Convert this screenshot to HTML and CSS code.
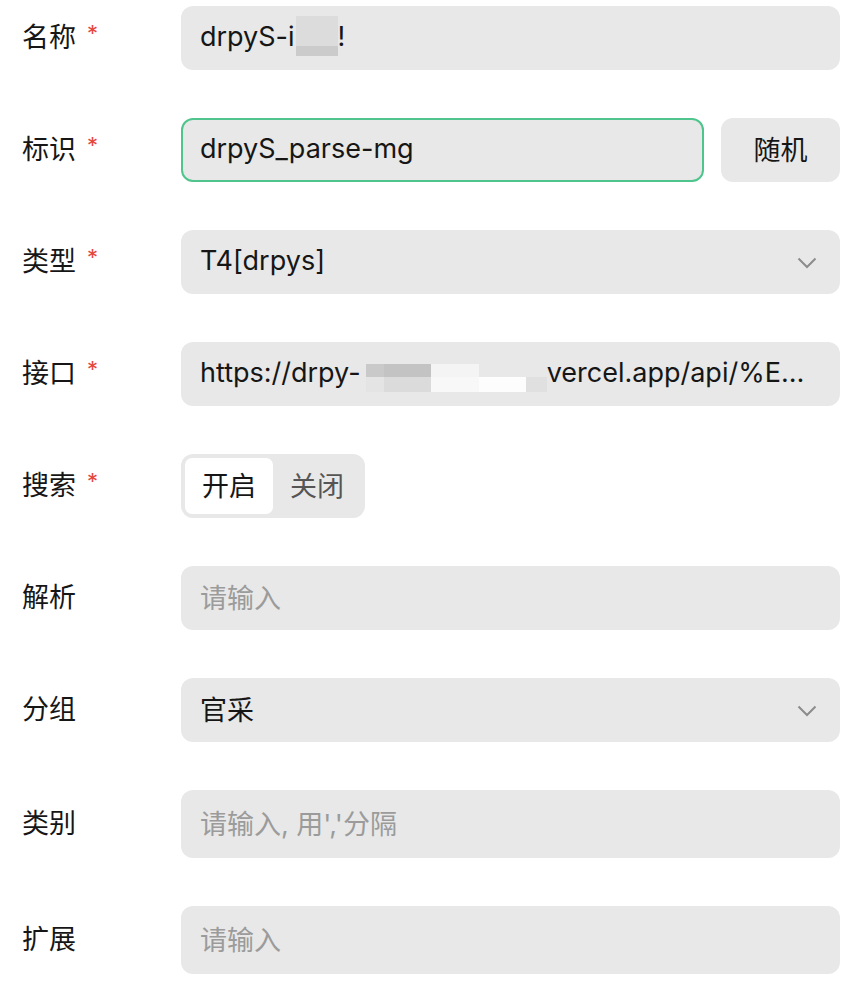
FILE: index.html
```html
<!DOCTYPE html>
<html lang="zh">
<head>
<meta charset="utf-8">
<title>编辑源</title>
<link rel="stylesheet" href="styles.css">
</head>
<body>
<form class="form">
  <div class="row">
    <div class="label">名称<span class="req">*</span></div>
    <div class="field">
      <div class="input value"><span>drpyS-i</span><span class="mosaic-a"></span><span>!</span></div>
    </div>
  </div>

  <div class="row">
    <div class="label">标识<span class="req">*</span></div>
    <div class="field with-btn">
      <div class="input focused value">drpyS_parse-mg</div>
      <div class="btn">随机</div>
    </div>
  </div>

  <div class="row">
    <div class="label">类型<span class="req">*</span></div>
    <div class="field">
      <div class="input select value"><span>T4[drpys]</span>
        <svg class="chev" width="20" height="12" viewBox="0 0 20 12"><polyline points="1.5,1.5 10,10 18.5,1.5" fill="none" stroke="#8c8c8c" stroke-width="2"/></svg>
      </div>
    </div>
  </div>

  <div class="row">
    <div class="label">接口<span class="req">*</span></div>
    <div class="field">
      <div class="input value"><span>https://drpy-</span><span class="mosaic-b"><i class="t1"></i><i class="t2"></i><i class="t3"></i><i class="t4"></i><i class="t5"></i><i class="b1"></i><i class="b2"></i><i class="b3"></i><i class="b4"></i><i class="b5"></i></span><span>vercel.app/api/%E…</span></div>
    </div>
  </div>

  <div class="row">
    <div class="label">搜索<span class="req">*</span></div>
    <div class="field">
      <div class="segment">
        <div class="seg active">开启</div>
        <div class="seg">关闭</div>
      </div>
    </div>
  </div>

  <div class="row">
    <div class="label">解析</div>
    <div class="field">
      <div class="input placeholder">请输入</div>
    </div>
  </div>

  <div class="row">
    <div class="label">分组</div>
    <div class="field">
      <div class="input select value"><span>官采</span>
        <svg class="chev" width="20" height="12" viewBox="0 0 20 12"><polyline points="1.5,1.5 10,10 18.5,1.5" fill="none" stroke="#8c8c8c" stroke-width="2"/></svg>
      </div>
    </div>
  </div>

  <div class="row">
    <div class="label">类别</div>
    <div class="field">
      <div class="input tall placeholder">请输入, 用','分隔</div>
    </div>
  </div>

  <div class="row">
    <div class="label">扩展</div>
    <div class="field">
      <div class="input tall placeholder">请输入</div>
    </div>
  </div>
</form>
</body>
</html>
```

FILE: styles.css
```css
html, body {
  margin: 0;
  padding: 0;
  background: #ffffff;
}

body {
  font-family: Inter, "Noto Sans CJK SC", sans-serif;
  font-size: 27px;
  color: #161616;
}

.form {
  padding: 6px 10px 0 22px;
  display: flex;
  flex-direction: column;
  gap: 48px;
}

.row {
  display: flex;
  align-items: center;
}

.label {
  width: 159px;
  flex: none;
  display: flex;
  align-items: center;
  padding-bottom: 5px;
  box-sizing: border-box;
  color: #161616;
}

.req {
  color: #e5453d;
  font-size: 22px;
  margin-left: 11px;
  margin-top: -6px;
}

.field {
  flex: 1;
  display: flex;
}

.with-btn {
  gap: 17px;
}

.input {
  flex: 1;
  height: 64px;
  box-sizing: border-box;
  background: #e8e8e8;
  border-radius: 12px;
  padding: 0 19px 4px;
  display: flex;
  align-items: center;
  white-space: nowrap;
  overflow: hidden;
}

.input.tall {
  height: 68px;
}

.input.focused {
  border: 2px solid #4fc48c;
  padding: 0 17px 4px;
}

.placeholder {
  color: #9b9b9b;
}

.select {
  justify-content: space-between;
  padding-right: 23px;
}

.chev {
  display: block;
  margin-top: 6px;
}

.btn {
  width: 119px;
  height: 64px;
  flex: none;
  box-sizing: border-box;
  padding-bottom: 4px;
  background: #e8e8e8;
  border-radius: 12px;
  display: flex;
  align-items: center;
  justify-content: center;
  color: #161616;
}

.mosaic-a {
  display: inline-block;
  width: 42px;
  height: 40px;
  margin-top: 0;
  margin-left: 1px;
  background: linear-gradient(to bottom, #dcdcdc 0, #dcdcdc 30px, #cbcbcb 30px, #cbcbcb 40px);
}

.mosaic-b {
  display: grid;
  grid-template-columns: 18px 47px 48px 47px 21px;
  grid-template-rows: 13px 15px;
  margin-top: 12px;
  margin-left: 5px;
}

.mosaic-b i {
  display: block;
}

.mosaic-b .t1 { background: #c9c9c9; }
.mosaic-b .t2 { background: #c3c3c3; }
.mosaic-b .t3 { background: #f4f4f4; }
.mosaic-b .t4 { background: #e8e8e8; }
.mosaic-b .t5 { background: #e8e8e8; }
.mosaic-b .b1 { background: #e4e4e4; }
.mosaic-b .b2 { background: #dbdbdb; }
.mosaic-b .b3 { background: #f8f8f8; }
.mosaic-b .b4 { background: #fdfdfd; }
.mosaic-b .b5 { background: #e0e0e0; }

.segment {
  display: flex;
  width: 184px;
  height: 64px;
  box-sizing: border-box;
  padding: 4px;
  background: #e8e8e8;
  border-radius: 12px;
}

.seg {
  width: 88px;
  display: flex;
  align-items: center;
  justify-content: center;
  padding-bottom: 4px;
  box-sizing: border-box;
  border-radius: 7px;
  color: #555555;
}

.seg.active {
  background: #ffffff;
  color: #161616;
}
```
